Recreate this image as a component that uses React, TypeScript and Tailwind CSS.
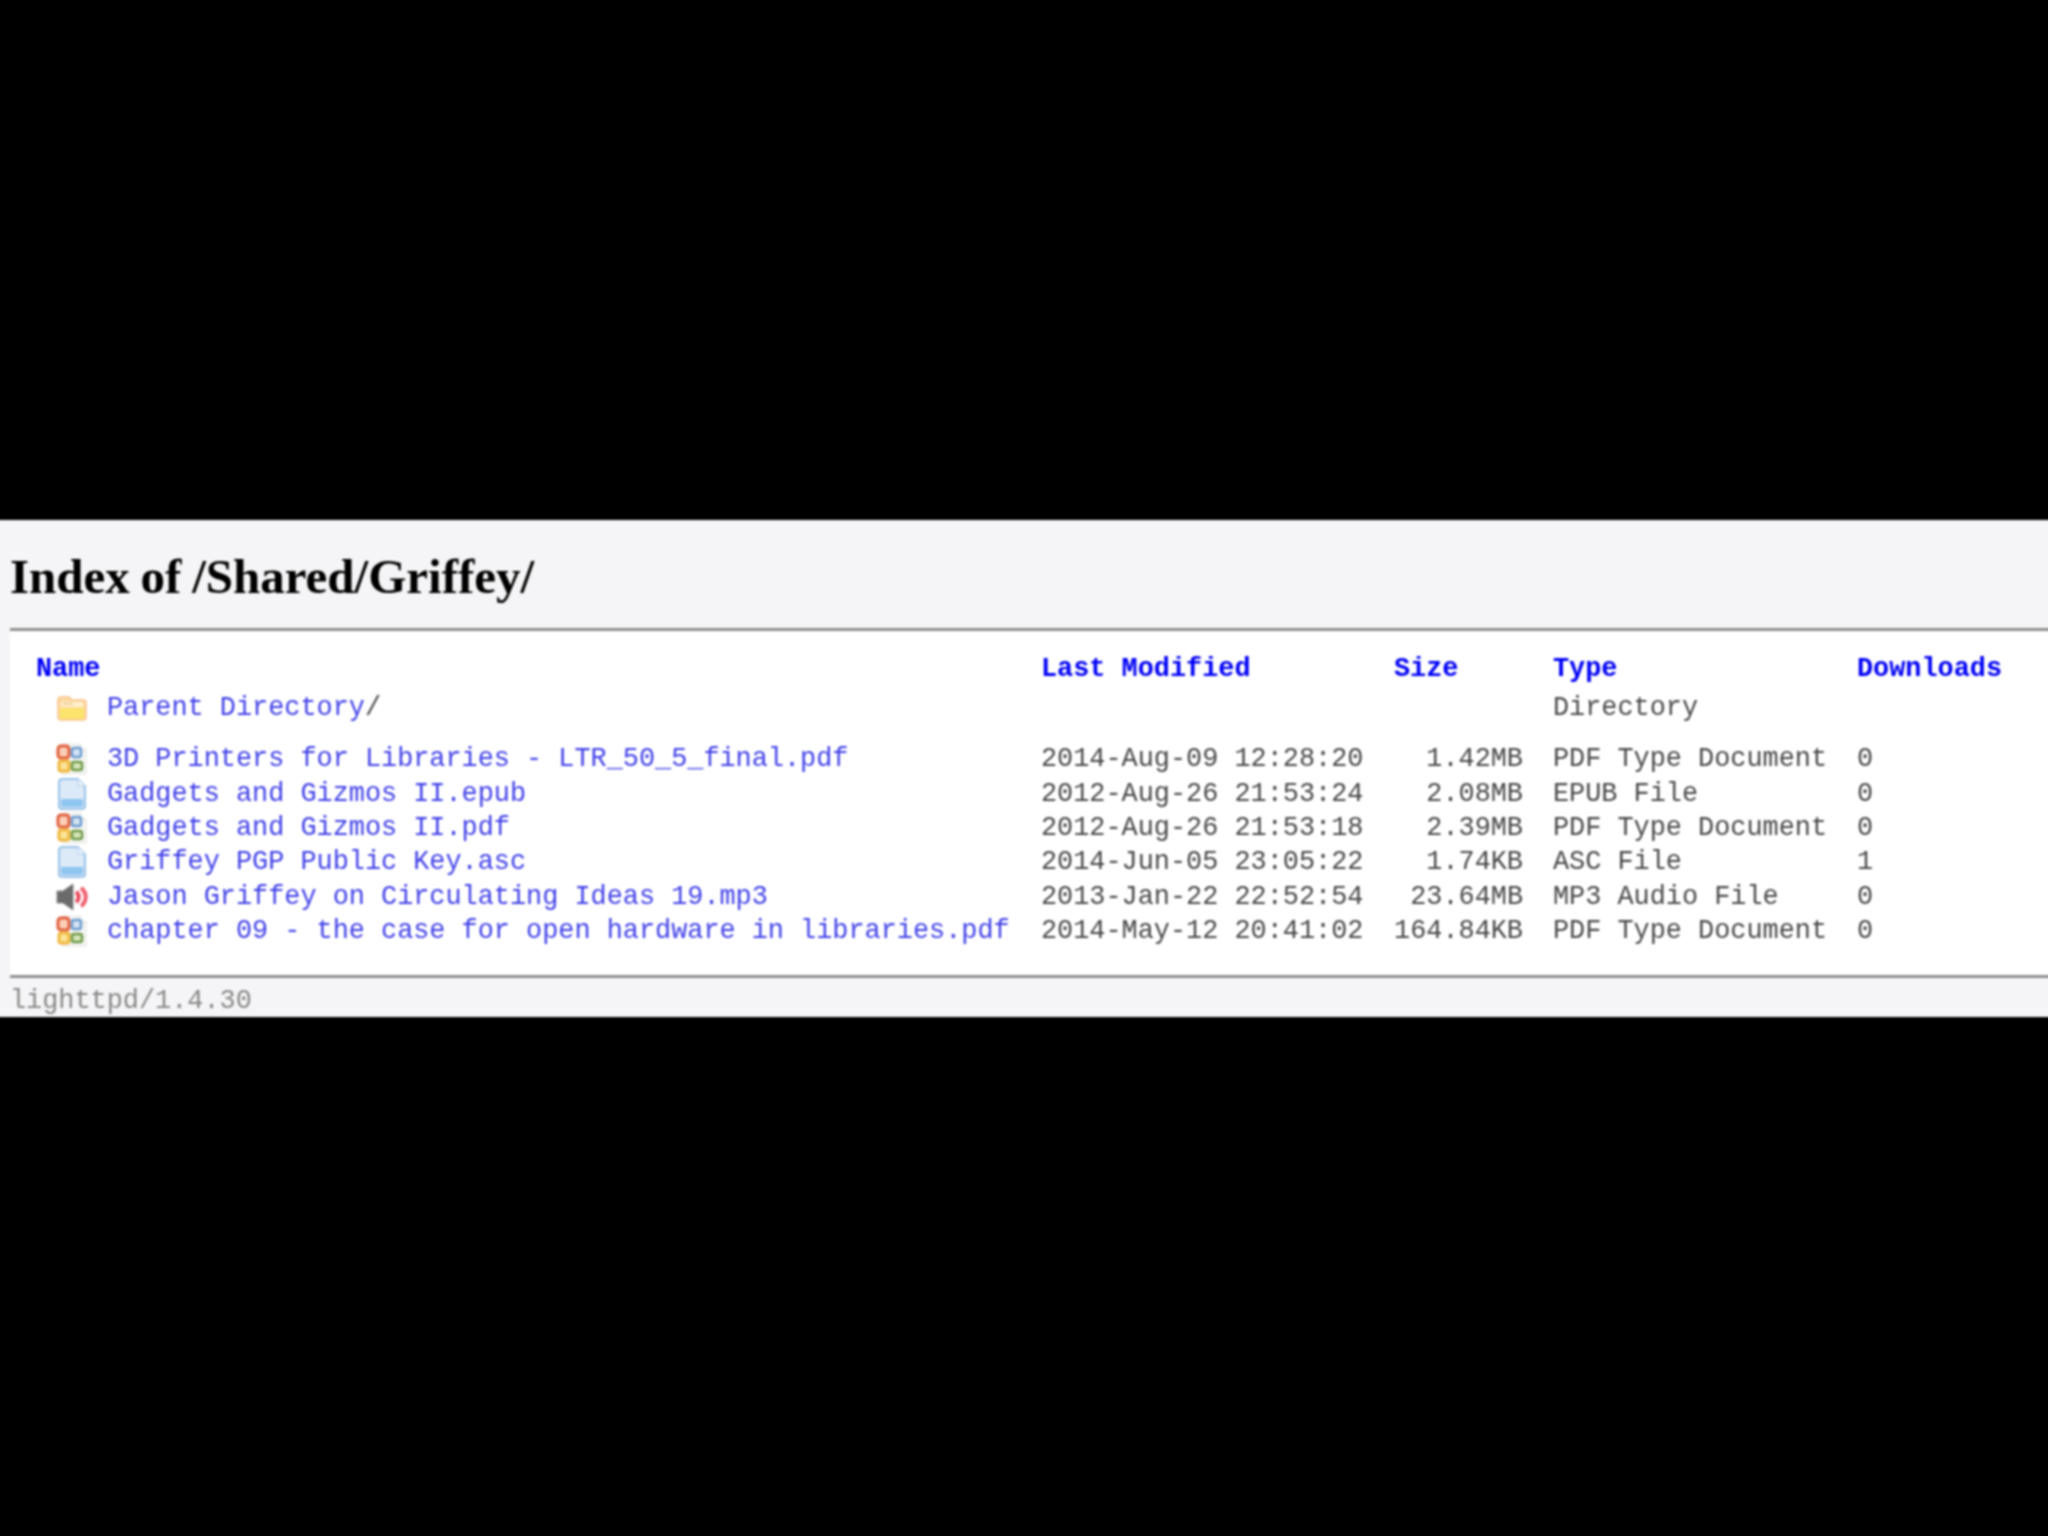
function FolderIcon() {
  return (
    <svg width="32" height="28" viewBox="0 0 32 28" className="block">
      <path d="M2 6 a3 3 0 0 1 3-3 h8 l3 3 h11 a3 3 0 0 1 3 3 v14 a3 3 0 0 1-3 3 H5 a3 3 0 0 1-3-3 z" fill="#fcd9a0" stroke="#f8c48a" strokeWidth="1.5" />
      <path d="M5 8 h22 v5 H5 z" fill="#fff0cc" />
      <path d="M4 14 h24 v9 a2 2 0 0 1-2 2 H6 a2 2 0 0 1-2-2 z" fill="#fce36b" />
      <path d="M7 10 h10" stroke="#ecc48c" strokeWidth="1.5" />
    </svg>
  )
}

function PdfIcon() {
  return (
    <svg width="32" height="32" viewBox="0 0 32 32" className="block">
      <path d="M6 1 h18 l6 6 v24 H6 z" fill="#f7f7f5" stroke="#e2e2e0" />
      <path d="M24 1 v6 h6" fill="#fff" stroke="#d8d8d6" />
      <rect x="2" y="3" width="11" height="12" rx="3" fill="#fbd0b8" stroke="#e2603e" strokeWidth="3" />
      <rect x="16" y="5" width="9" height="9" rx="2" fill="#d5e4f3" stroke="#6c9ccf" strokeWidth="2.5" />
      <rect x="3" y="18" width="10" height="10" rx="2" fill="#fbe59a" stroke="#f0b840" strokeWidth="3" />
      <rect x="16" y="19" width="10" height="8" rx="2" fill="#d6e6b8" stroke="#6f9a4a" strokeWidth="2.5" />
    </svg>
  )
}

function DocIcon() {
  return (
    <svg width="32" height="32" viewBox="0 0 32 32" className="block">
      <path d="M3 4 a3 3 0 0 1 3-3 h16 l7 7 v20 a3 3 0 0 1-3 3 H6 a3 3 0 0 1-3-3 z" fill="#dceaf8" stroke="#7fb2e2" strokeWidth="1.5" />
      <path d="M22 1 v7 h7" fill="#f2f7fc" stroke="#a9cbea" strokeWidth="1" />
      <path d="M5 21 h22 v6 a2 2 0 0 1-2 2 H7 a2 2 0 0 1-2-2 z" fill="#8fc6ef" />
    </svg>
  )
}

function AudioIcon() {
  return (
    <svg width="36" height="28" viewBox="0 0 36 28" className="block">
      <path d="M1 8 h6 l10-7 v26 l-10-7 H1 z" fill="#6b6b6b" stroke="#8a8a8a" strokeWidth="1" />
      <path d="M20 9 a6 6 0 0 1 0 10" fill="none" stroke="#ea4b5c" strokeWidth="4" />
      <path d="M25 5 a11 11 0 0 1 0 18" fill="none" stroke="#f0606f" strokeWidth="4" />
    </svg>
  )
}

const rows = [
  { icon: PdfIcon, name: "3D Printers for Libraries - LTR_50_5_final.pdf", date: "2014-Aug-09 12:28:20", size: "1.42MB", type: "PDF Type Document", dl: "0" },
  { icon: DocIcon, name: "Gadgets and Gizmos II.epub", date: "2012-Aug-26 21:53:24", size: "2.08MB", type: "EPUB File", dl: "0" },
  { icon: PdfIcon, name: "Gadgets and Gizmos II.pdf", date: "2012-Aug-26 21:53:18", size: "2.39MB", type: "PDF Type Document", dl: "0" },
  { icon: DocIcon, name: "Griffey PGP Public Key.asc", date: "2014-Jun-05 23:05:22", size: "1.74KB", type: "ASC File", dl: "1" },
  { icon: AudioIcon, name: "Jason Griffey on Circulating Ideas 19.mp3", date: "2013-Jan-22 22:52:54", size: "23.64MB", type: "MP3 Audio File", dl: "0" },
  { icon: PdfIcon, name: "chapter 09 - the case for open hardware in libraries.pdf", date: "2014-May-12 20:41:02", size: "164.84KB", type: "PDF Type Document", dl: "0" },
]

function NameCell({ icon: Icon, name, suffix }: { icon: () => React.ReactElement; name: string; suffix?: string }) {
  return (
    <div className="flex items-center">
      <div className="w-[71px] pl-[20px] shrink-0">
        <Icon />
      </div>
      <span className="text-[#3f3fe8]">{name}</span>
      {suffix && <span className="text-[#484848]">{suffix}</span>}
    </div>
  )
}

export default function App() {
  return (
    <div className="min-h-[1536px] bg-black flex flex-col pt-[520px] overflow-hidden">
      {/* panel runs past both page edges so the soft blur doesn't fade at the sides */}
      <div className="h-[497px] -mx-[10px] pl-[10px] bg-[#f5f5f7] overflow-hidden blur-[0.8px]">
        <h1 className="ml-[10px] pt-[29px] h-[108px] text-[49px] leading-[55px] font-bold text-black font-['Liberation_Serif',serif] [word-spacing:-1.5px]">
          Index of /Shared/Griffey/
        </h1>
        <div className="ml-[10px] h-[350px] bg-white border-y-[3px] border-[#8f8f8f] pt-[21px] font-['Liberation_Mono',monospace] text-[26.87px] leading-[34px] text-[#484848]">
          <table className="table-fixed border-collapse">
            <colgroup>
              <col className="w-[1031px]" />
              <col className="w-[353px]" />
              <col className="w-[159px]" />
              <col className="w-[304px]" />
              <col className="w-[180px]" />
            </colgroup>
            <thead>
              <tr className="h-[34px] text-left font-bold text-[#0000f5]">
                <th className="pl-[26px] font-bold">Name</th>
                <th className="font-bold">Last Modified</th>
                <th className="font-bold">Size</th>
                <th className="font-bold">Type</th>
                <th className="font-bold">Downloads</th>
              </tr>
            </thead>
            <tbody>
              <tr className="h-[44px]">
                <td className="pl-[26px]">
                  <NameCell icon={FolderIcon} name="Parent Directory" suffix="/" />
                </td>
                <td />
                <td />
                <td>Directory</td>
                <td />
              </tr>
              <tr className="h-[12px]">
                <td colSpan={5} />
              </tr>
              {rows.map((row, index) => (
                <tr key={index} className="h-[34.4px]">
                  <td className="pl-[26px]">
                    <NameCell icon={row.icon} name={row.name} />
                  </td>
                  <td>{row.date}</td>
                  <td className="pr-[30px] text-right">{row.size}</td>
                  <td>{row.type}</td>
                  <td>{row.dl}</td>
                </tr>
              ))}
            </tbody>
          </table>
        </div>
        <div className="ml-[10px] pt-[8px] font-['Liberation_Mono',monospace] text-[26.87px] leading-[30px] text-[#888]">
          lighttpd/1.4.30
        </div>
      </div>
    </div>
  )
}
